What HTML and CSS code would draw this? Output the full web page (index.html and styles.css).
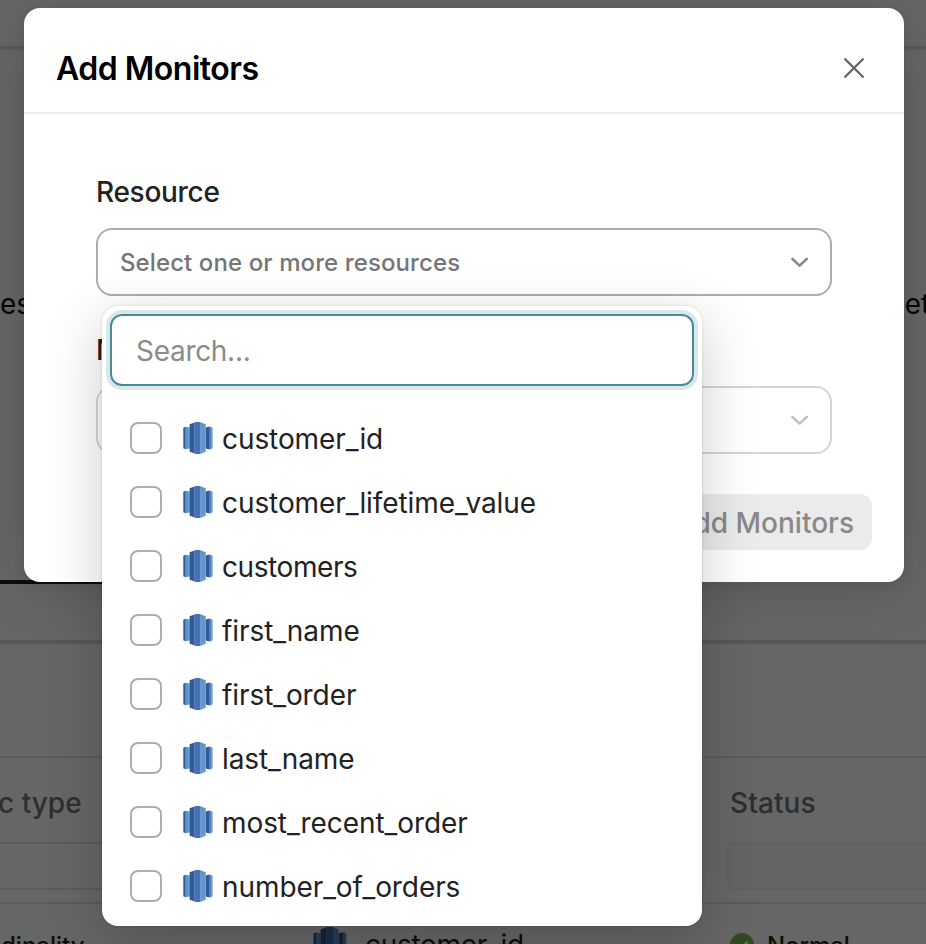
FILE: index.html
```html
<!DOCTYPE html>
<html lang="en">
<head>
<meta charset="utf-8">
<title>Add Monitors</title>
<link rel="stylesheet" href="styles.css">
</head>
<body>
<svg class="defs" aria-hidden="true">
  <symbol id="redshift" viewBox="0 0 30 32">
    <path fill="#315b95" d="M0.3 5.7 2.8 4.6V27.4L0.3 26.3Z"/>
    <path fill="#6395cf" d="M2.6 4.8 6.8 5.5V26.5L2.6 27.2Z"/>
    <path fill="#315b95" d="M22.6 5.5 26.8 4.5V27.5L22.6 26.5Z"/>
    <path fill="#4c7fc0" d="M26.8 4.5 29.5 5.7V26.3L26.8 27.5Z"/>
    <path fill="#7fadde" d="M28 5.2 28.8 5.5V26.5L28 26.8Z"/>
    <path fill="#315b95" d="M6.6 2.2 11.7 0.4V31.6L6.6 29.8Z"/>
    <path fill="#4271b8" d="M11.6 0.3 13 0H16.5L17.7 0.3V31.7L16.5 32H13L11.6 31.7Z"/>
    <path fill="#6395cf" d="M17.6 0.3 22.7 2.2V29.8L17.6 31.7Z"/>
  </symbol>
  <symbol id="chevron" viewBox="0 0 18 11">
    <path d="M1.4 1.8 8.6 8.7 15.8 1.8" fill="none" stroke="currentColor" stroke-width="2.5" stroke-linecap="round" stroke-linejoin="round"/>
  </symbol>
</svg>

<main class="page">
  <div class="topbar"></div>
  <section class="summary"><span>es</span><span class="cut-right">iet</span></section>
  <div class="tabs"><div class="tab-active"></div></div>
  <div class="toolbar"></div>
  <div class="table-head"><span class="col-type">c type</span><span class="col-status">Status</span></div>
  <div class="table-filter"><div class="filter-plain"></div><div class="filter-status"></div></div>
  <div class="table-gap"></div>
  <div class="table-row">
    <span class="cell-type">dinality</span>
    <span class="cell-name"><svg class="row-icon"><use href="#redshift"/></svg>customer_id</span>
    <span class="cell-status"><svg class="ok" viewBox="0 0 24 24"><circle cx="12" cy="12" r="12" fill="#7ab850"/><path d="M7 12.5 10.5 16 17.5 8.5" fill="none" stroke="#fff" stroke-width="2.6"/></svg>Normal</span>
  </div>
</main>
<div class="backdrop"></div>

<div class="modal">
  <header class="modal-header">
    <h1>Add Monitors</h1>
    <svg class="close" viewBox="0 0 20 20"><path d="M1.2 1.2 18.8 18.8M18.8 1.2 1.2 18.8" stroke="#666" stroke-width="2.3" stroke-linecap="round"/></svg>
  </header>
  <div class="modal-body">
    <label class="label">Resource</label>
    <div class="select"><span>Select one or more resources</span><svg class="chevron"><use href="#chevron"/></svg></div>
    <label class="label second">M</label>
    <div class="select disabled"><span></span><svg class="chevron"><use href="#chevron"/></svg></div>
  </div>
  <footer class="modal-footer"><button class="submit" disabled>Add Monitors</button></footer>
</div>

<div class="popover">
  <div class="search"><span>Search...</span></div>
  <ul class="options">
    <li><i class="check"></i><svg class="icon"><use href="#redshift"/></svg><span>customer_id</span></li>
    <li><i class="check"></i><svg class="icon"><use href="#redshift"/></svg><span>customer_lifetime_value</span></li>
    <li><i class="check"></i><svg class="icon"><use href="#redshift"/></svg><span class="tight">customers</span></li>
    <li><i class="check"></i><svg class="icon"><use href="#redshift"/></svg><span>first_name</span></li>
    <li><i class="check"></i><svg class="icon"><use href="#redshift"/></svg><span>first_order</span></li>
    <li><i class="check"></i><svg class="icon"><use href="#redshift"/></svg><span>last_name</span></li>
    <li><i class="check"></i><svg class="icon"><use href="#redshift"/></svg><span>most_recent_order</span></li>
    <li><i class="check"></i><svg class="icon"><use href="#redshift"/></svg><span>number_of_orders</span></li>
  </ul>
</div>
</body>
</html>
```
FILE: styles.css
```css
* { box-sizing: border-box; }
html, body { margin: 0; height: 944px; overflow: hidden; }
body {
  position: relative;
  font-family: Inter, "Liberation Sans", sans-serif;
  font-size: 28px;
  line-height: 36px;
  color: #222;
  background: #fff;
}
.defs { position: absolute; width: 0; height: 0; }
svg { display: block; flex: none; }

/* Page behind the dialog */
.page { height: 944px; overflow: hidden; display: flex; flex-direction: column; }
.page > * { flex: none; }
.topbar { height: 50px; border-bottom: 4px solid #e4e4e4; }
.summary { height: 530px; padding-top: 236px; display: flex; justify-content: space-between; color: #111; }
.cut-right { width: 28px; white-space: nowrap; }
.tabs { height: 64px; border-bottom: 4px solid #dcdcdc; }
.tab-active { width: 300px; height: 4px; background: #222; }
.toolbar { height: 114px; border-bottom: 2px solid #e3e3e3; }
.table-head { height: 84px; display: flex; align-items: center; padding-top: 5px; color: #747474; font-weight: 500; }
.col-type { width: 732px; margin-left: -2px; }
.col-status { letter-spacing: 0.1px; }
.table-filter { height: 48px; display: flex; }
.filter-plain { width: 727px; border: solid #e3e3e3; border-width: 2px 0; clip-path: inset(0 25px 0 0); }
.filter-status { flex: 1; background: #fbfbf4; border: 2px solid #f3f3ec; border-right: 0; border-radius: 5px 0 0 5px; }
.table-gap { height: 14px; border-bottom: 2px solid #e3e3e3; }
.table-row { height: 80px; display: flex; padding-top: 22px; font-size: 24px; color: #222; }
.cell-type { width: 313px; padding: 2px 0 0 1px; font-weight: 500; }
.cell-name { width: 417px; padding-top: 1px; display: flex; gap: 18px; font-size: 28px; letter-spacing: -0.3px; }
.row-icon { width: 34px; height: 36px; }
.cell-status { padding-top: 2px; display: flex; gap: 13px; font-weight: 500; letter-spacing: -0.1px; }
.ok { width: 24px; height: 24px; margin-top: 5px; }
.backdrop { position: absolute; inset: 0; background: rgba(0, 0, 0, 0.6); }

/* Dialog */
.modal {
  position: absolute;
  left: 24px;
  top: 8px;
  width: 880px;
  height: 574px;
  display: flex;
  flex-direction: column;
  background: #fff;
  border-radius: 16px;
  box-shadow: 0 8px 60px rgba(0, 0, 0, 0.14), 0 4px 12px rgba(0, 0, 0, 0.08);
}
.modal-header {
  height: 106px;
  padding: 16px 40px 0 32px;
  display: flex;
  align-items: center;
  justify-content: space-between;
  border-bottom: 2px solid #ebebeb;
}
h1 { margin: 0; padding-top: 2px; font-size: 32px; line-height: 40px; font-weight: 600; letter-spacing: -0.5px; color: #000; }
.close { width: 20px; height: 20px; }
.modal-body { padding: 60px 72px 0; display: flex; flex-direction: column; }
.label { font-weight: 500; height: 36px; margin-bottom: 18px; letter-spacing: -0.3px; }
.label.second { margin-top: 36px; }
.select {
  height: 68px;
  padding: 0 21px 0 22px;
  display: flex;
  align-items: center;
  justify-content: space-between;
  border: 2px solid #adadad;
  border-radius: 16px;
  font-size: 24px;
  font-weight: 500;
  letter-spacing: 0.1px;
  color: #757575;
}
.select span { padding-top: 2px; }
.chevron { width: 18px; height: 11px; color: #858585; }
.select.disabled { border-color: #d5d5d5; }
.disabled .chevron { color: #c0c0c0; }
.modal-footer { display: flex; justify-content: flex-end; padding: 40px 32px 0; }
.submit {
  height: 56px;
  padding: 1px 18px 0;
  border: 0;
  border-radius: 12px;
  background: #ebebeb;
  color: #888;
  font: 500 28px/36px Inter, "Liberation Sans", sans-serif;
}

/* Resource picker */
.popover {
  position: absolute;
  left: 102px;
  top: 306px;
  width: 600px;
  height: 620px;
  padding: 8px;
  background: #fff;
  border-radius: 16px;
  box-shadow: 0 0 3px rgba(0, 0, 0, 0.14), 0 14px 56px rgba(0, 0, 0, 0.2);
}
.search {
  height: 72px;
  padding: 1px 24px 0;
  display: flex;
  align-items: center;
  border: 2px solid #458c98;
  border-radius: 12px;
  box-shadow: 0 0 0 4px #dae8ea;
  color: #8b8b8b;
  letter-spacing: -0.3px;
}
.options { list-style: none; margin: 20px 0 0; padding: 0 20px; }
.options li { height: 64px; display: flex; align-items: center; letter-spacing: -0.08px; }
.options .tight { letter-spacing: -0.42px; }
.options span { padding-top: 1px; }
.check { width: 32px; height: 32px; border: 2px solid #adadad; border-radius: 8px; margin-right: 21px; }
.icon { width: 30px; height: 32px; margin-right: 9px; }
```
